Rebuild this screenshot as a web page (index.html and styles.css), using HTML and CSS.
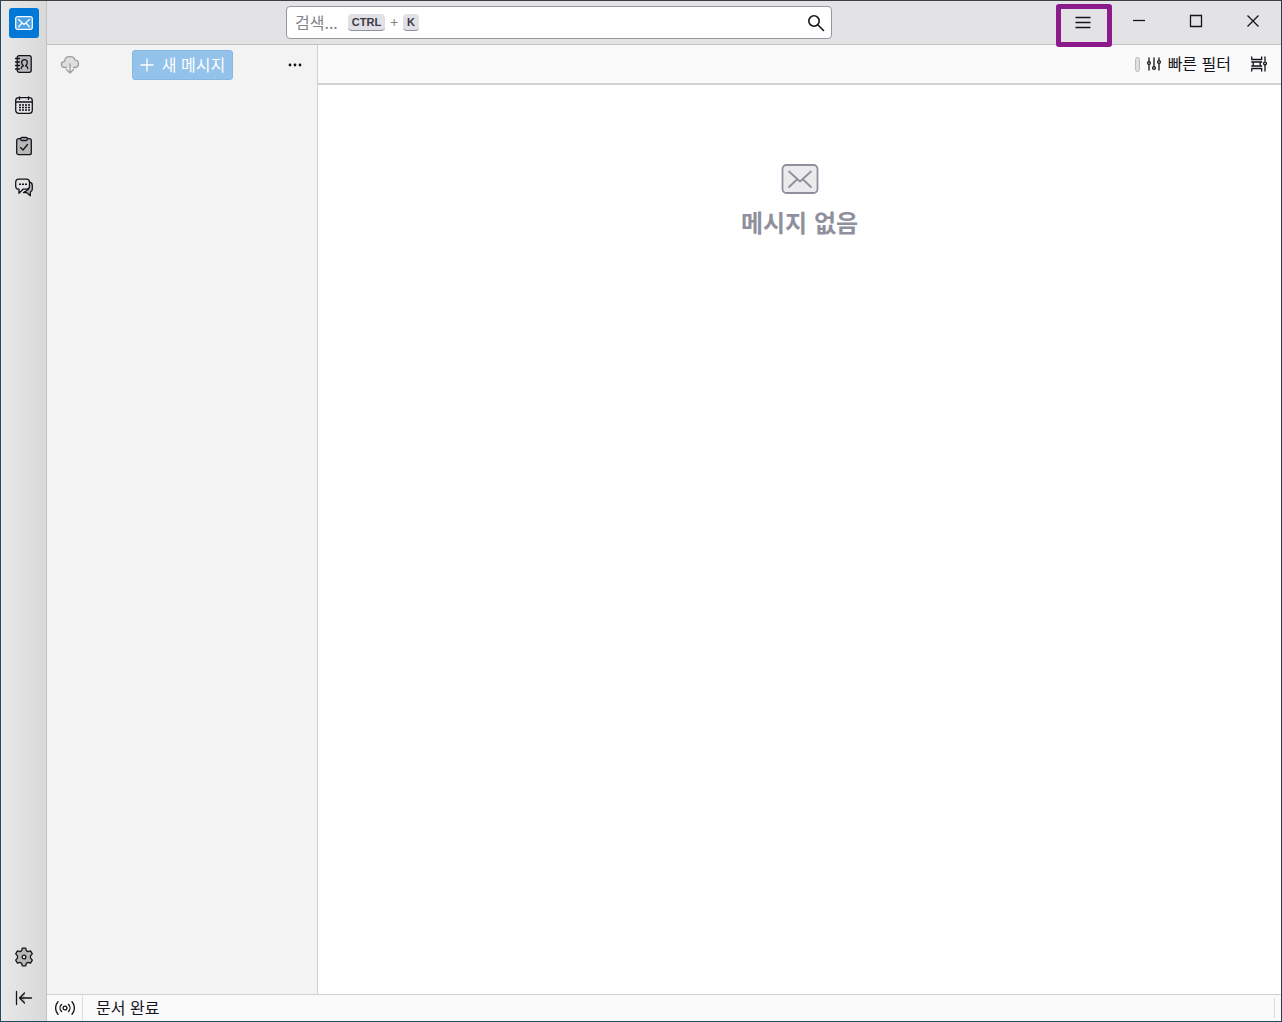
FILE: index.html
```html
<!DOCTYPE html>
<html lang="ko">

<head>
    <meta charset="UTF-8">
    <meta name="viewport" content="width=device-width, initial-scale=1.0">
    <title>메일</title>
    <link rel="stylesheet" href="styles.css">
</head>

<body>
    <div class="window">
        <!-- Spaces toolbar -->
        <nav class="spaces">
            <button type="button" class="space active" aria-label="메일">
                <svg width="20" height="20" viewBox="0 0 20 20">
                    <rect x="1.7" y="3.7" width="16.6" height="12.6" rx="2" />
                    <path d="M4.5 6.5 10 11.5l5.5-5M4.5 14l3.5-4M15.5 14l-3.5-4" />
                </svg>
            </button>
            <button type="button" class="space" aria-label="주소록">
                <svg width="20" height="20" viewBox="0 0 20 20">
                    <rect x="3.2" y="1.7" width="14" height="16.6" rx="2" />
                    <path d="M1.5 4.5h4M1.5 8h4M1.5 11.5h4M1.5 15h4" />
                    <path d="M7.2 14.5c0-2 .8-2.3 2.2-2.700-1.200-.9-1.700-1.800-1.700-3.200C7.700 7 8.600 5.700 10.500 5.700s2.800 1.300 2.800 2.900c0 1.400-.5 2.300-1.700 3.200 1.400.4 2.200.7 2.200 2.700" />
                </svg>
            </button>
            <button type="button" class="space" aria-label="일정">
                <svg width="20" height="20" viewBox="0 0 20 20">
                    <rect class="pale" x="1.7" y="2.7" width="16.6" height="15.6" rx="3" />
                    <path d="M2 7h16M5.5 2v2.5M14.5 2v2.5" />
                    <path class="dots" d="M5 10h11M5 12.5h11M5 15h11" />
                </svg>
            </button>
            <button type="button" class="space" aria-label="할 일">
                <svg width="20" height="20" viewBox="0 0 20 20">
                    <rect x="2.7" y="2.7" width="14.6" height="16" rx="2" />
                    <rect x="6.5" y="1.5" width="7" height="3" rx="1.5" />
                    <path class="line" d="m6.500 11.5 2.500 2.500 4.500-5.500" />
                </svg>
            </button>
            <button type="button" class="space" aria-label="대화">
                <svg width="20" height="20" viewBox="0 0 20 20">
                    <path d="M15 5c2 .2 3.300 1.500 3.300 3.500V12c0 1.700-.8 2.700-2 3.200v3.600l-3.800-3.300h-3l5-3z" />
                    <path class="pale" d="M4.700 2.200h7.600c2 0 3.200 1.200 3.200 3v4c0 1.800-1.200 3-3.200 3H9l-4 4v-4c-2 0-3.300-1.200-3.300-3v-4c0-1.800 1-3 3-3z" />
                    <path class="dots" d="M5 7.300h8" />
                </svg>
            </button>
            <button type="button" class="space settings" aria-label="설정">
                <svg width="20" height="20" viewBox="0 0 20 20">
                    <path d="M8.300 1.200h3.400l.7 2.500 1.500.9 2.600-.7 1.800 3-1.800 2v2.200l1.800 2-1.800 3-2.600-.7-1.500.9-.7 2.500H8.300l-.7-2.500-1.500-.9-2.600.7-1.800-3 1.800-2V8.900l-1.800-2 1.800-3 2.600.7 1.500-.9z" />
                    <circle class="pale" cx="10" cy="10" r="1.9" />
                </svg>
            </button>
            <button type="button" class="space" aria-label="접기">
                <svg width="20" height="20" viewBox="0 0 20 20">
                    <path class="line" d="M2.5 3.5v13M17.5 10H5.5M10.5 5l-5 5 5 5" />
                </svg>
            </button>
        </nav>

        <!-- Title bar -->
        <header class="titlebar">
            <form class="search">
                <input type="text" id="searchText" aria-label="검색">
                <label for="searchText" class="hint">검색... <kbd>CTRL</kbd><span>+</span><kbd>K</kbd></label>
                <button type="submit" aria-label="찾기">
                    <svg width="18" height="18" viewBox="0 0 18 18">
                        <circle cx="7" cy="7" r="5.2" />
                        <path d="m11 11 5.5 5.5" />
                    </svg>
                </button>
            </form>
            <div class="controls">
                <button type="button" class="menu" aria-label="메뉴">
                    <svg width="16" height="16" viewBox="0 0 16 16">
                        <path d="M.5 2.500h15M.5 7.500h15M.5 12.500h15" />
                    </svg>
                </button>
                <button type="button" aria-label="최소화">
                    <svg width="14" height="14" viewBox="0 0 14 14"><path d="M1 6.500h12" /></svg>
                </button>
                <button type="button" aria-label="최대화">
                    <svg width="14" height="14" viewBox="0 0 14 14"><path d="M1.500 1.500h11v11h-11z" /></svg>
                </button>
                <button type="button" aria-label="닫기">
                    <svg width="14" height="14" viewBox="0 0 14 14"><path d="m1.500 1.500 11 11M12.500 1.500l-11 11" /></svg>
                </button>
            </div>
        </header>

        <!-- Folder pane -->
        <aside class="folders">
            <button type="button" class="icon fetch" aria-label="메시지 받기" disabled>
                <svg width="20" height="20" viewBox="0 0 20 20">
                    <path class="cloud" d="M6.500 12.500H5c-4.500 0-5-5.500-.5-6C5 3 7.500 1.500 10 1.700c3-.2 4.500 1.500 5 3.500 4.500 0 4.500 6.300 1 7.300h-2.500" />
                    <path d="M10 9v9M6.500 14.500 10 18l3.500-3.500" />
                </svg>
            </button>
            <button type="button" class="compose" disabled>
                <svg width="14" height="14" viewBox="0 0 14 14"><path d="M7 1v12M1 7h12" /></svg>
                <span class="label">새 메시지</span>
            </button>
            <button type="button" class="icon" aria-label="더 보기">
                <svg width="14" height="4" viewBox="0 0 14 4">
                    <circle cx="2" cy="2" r="1.400" />
                    <circle cx="7" cy="2" r="1.400" />
                    <circle cx="12" cy="2" r="1.400" />
                </svg>
            </button>
        </aside>

        <!-- Message list -->
        <main class="messages">
            <div class="message-bar">
                <button type="button" class="filter">
                    <span class="indicator"></span>
                    <svg width="16" height="16" viewBox="0 0 16 16">
                        <path d="M3 2v3.500M3 9v5M8 2v8M13 2v2M13 8v6" />
                        <circle cx="3" cy="7" r="1.400" />
                        <circle cx="8" cy="12" r="1.400" />
                        <circle cx="13" cy="6" r="1.400" />
                    </svg>
                    <span class="label">빠른 필터</span>
                </button>
                <button type="button" class="icon" aria-label="표시 옵션">
                    <svg width="16" height="16" viewBox="0 0 16 16">
                        <path d="M.7 1v2.500h10V1M.7 15v-2.500h10V15" />
                        <path d="M.7 6h10M.7 10h10M2.200 6v4M9.200 6v4M14 1v4M14 9v6" />
                        <circle cx="14" cy="7.500" r="1.400" />
                    </svg>
                </button>
            </div>
            <div class="empty">
                <svg width="38" height="32" viewBox="0 0 38 32">
                    <rect x="1.500" y="2" width="35" height="28" rx="4" />
                    <path d="m8 8.500 11 10 11-10M8 24l8-7.500M30 24l-8-7.500" />
                </svg>
                <p>메시지 없음</p>
            </div>
        </main>

        <!-- Status bar -->
        <footer class="status">
            <button type="button" aria-label="연결 상태">
                <svg width="20" height="18" viewBox="0 0 20 18">
                    <circle cx="10" cy="9" r="1.900" />
                    <path d="M6.500 5.500a5 5 0 0 0 0 7M13.500 5.500a5 5 0 0 1 0 7M3 2.700a9.500 9.500 0 0 0 0 12.600M17 2.700a9.500 9.500 0 0 1 0 12.600" />
                </svg>
            </button>
            <span class="status-text label">문서 완료</span>
            <span class="grip"></span>
        </footer>
    </div>
</body>

</html>
```

FILE: styles.css
```css
* {
    box-sizing: border-box;
}

body {
    margin: 0;
    font-family: "Noto Sans CJK KR", sans-serif;
    font-size: 16px;
    line-height: 20px;
    color: #15141a;
}

button {
    display: flex;
    align-items: center;
    justify-content: center;
    padding: 0;
    border: none;
    background: none;
    font: inherit;
    color: inherit;
}

svg {
    display: block;
    fill: none;
    stroke: currentColor;
    stroke-width: 1.3;
    stroke-linecap: round;
    stroke-linejoin: round;
}

.label {
    padding-bottom: 2px;
}

.window {
    display: grid;
    grid-template-columns: 46px 271px 1fr;
    grid-template-rows: 44px 1fr 27px;
    min-height: 100vh;
    border: 1px solid #1f4a63;
    border-top-color: #403d46;
    border-right-color: #263b50;
    background: #fff;
}

/* Spaces toolbar */
.spaces {
    grid-row: 1 / 4;
    display: flex;
    flex-direction: column;
    align-items: center;
    gap: 11px;
    padding: 7px 0 8px;
    border-right: 1px solid #c2c2c5;
    background: linear-gradient(to right, #e8e8e8, #d9d9d9);
}

.space {
    width: 30px;
    height: 30px;
    border-radius: 3px;
}

.space rect,
.space path:first-child {
    fill: #b8b8b8;
}

.space .pale {
    fill: #e4e4e4;
}

.space .line {
    fill: none;
}

.space .dots {
    stroke-width: 1.6;
    stroke-linecap: butt;
    stroke-dasharray: 2 1;
}

.space.active {
    background: #0078d7;
    color: #f4faff;
}

.space.active rect {
    fill: #4da0e3;
}

.settings {
    margin-top: auto;
}

/* Title bar */
.titlebar {
    grid-column: 2 / 4;
    display: flex;
    border-bottom: 1px solid #c2c2c5;
    background: #e3e3e5;
}

.search {
    position: relative;
    flex: 0 1 546px;
    height: 33px;
    margin: 5px 0 0 239px;
}

.search input {
    width: 100%;
    height: 100%;
    padding: 0 36px 0 8px;
    border: 1px solid #97969f;
    border-radius: 4px;
    background: #fff;
    font: inherit;
}

/* Hint and button lie over the text box */
.hint {
    position: absolute;
    top: 6px;
    left: 9px;
    display: flex;
    align-items: center;
    color: #858489;
}

.hint span {
    padding: 0 5px;
    font-size: 14px;
}

.search button {
    position: absolute;
    top: 8px;
    right: 7px;
}

.search svg {
    stroke-width: 1.6;
}

kbd {
    padding: 0 4px;
    border-bottom: 1px solid #8f8f9d;
    border-radius: 4px;
    background: #e0e0e6;
    font: bold 11px/16px "Liberation Sans", sans-serif;
    color: #3a3944;
}

.hint kbd:first-of-type {
    margin-left: 10px;
}

.controls {
    display: flex;
    margin-left: auto;
}

.controls button {
    width: 57px;
    height: 40px;
}

.controls svg {
    stroke-linecap: butt;
    stroke-linejoin: miter;
}

.controls .menu {
    position: relative;
    width: 54px;
    height: 43px;
}

/* Highlight frame around the menu button */
.menu::after {
    content: "";
    position: absolute;
    top: 3px;
    left: 0;
    box-sizing: border-box;
    width: 56px;
    height: 43px;
    border: 5px solid #8b1a8b;
    border-radius: 3px;
}

/* Folder pane */
.folders {
    display: flex;
    align-items: flex-start;
    justify-content: space-between;
    padding: 5px 7px 0 8px;
    border-right: 1px solid #d0d0d4;
    background: #f3f3f3;
}

.icon {
    width: 30px;
    height: 30px;
}

.folders .icon circle {
    fill: currentColor;
    stroke: none;
}

.fetch {
    color: #9d9d9f;
}

.fetch .cloud {
    fill: #dededf;
}

.compose {
    gap: 8px;
    height: 30px;
    padding: 0 7px;
    border: 1px solid #87b8e2;
    border-radius: 3px;
    background: #93c2ea;
    color: #fff;
}

/* Message list */
.message-bar {
    display: flex;
    align-items: center;
    justify-content: flex-end;
    gap: 13px;
    height: 40px;
    padding-right: 7px;
    border-bottom: 2px solid #d2d2d6;
    background: #fafafa;
}

.filter {
    gap: 6px;
}

.indicator {
    width: 5px;
    height: 15px;
    border: 1px solid #bcbcbf;
    border-radius: 3px;
    background: #dfdfe0;
}

.empty {
    display: flex;
    flex-direction: column;
    align-items: center;
    gap: 12px;
    padding-top: 78px;
    color: #8f8f9d;
}

.empty svg {
    stroke-width: 1.8;
}

.empty rect {
    fill: #ebebed;
}

.empty p {
    margin: 0;
    font-size: 24px;
    line-height: 30px;
    font-weight: bold;
}

/* Status bar */
.status {
    grid-column: 2 / 4;
    display: flex;
    align-items: center;
    border-top: 1px solid #d0d0d4;
    background: #fafafa;
}

.status button {
    width: 36px;
    height: 26px;
    border-right: 1px solid #dedee1;
}

.status-text {
    padding-left: 13px;
}

.grip {
    width: 1px;
    height: 20px;
    margin: 0 6px 0 auto;
    background: #dedee1;
}
```
